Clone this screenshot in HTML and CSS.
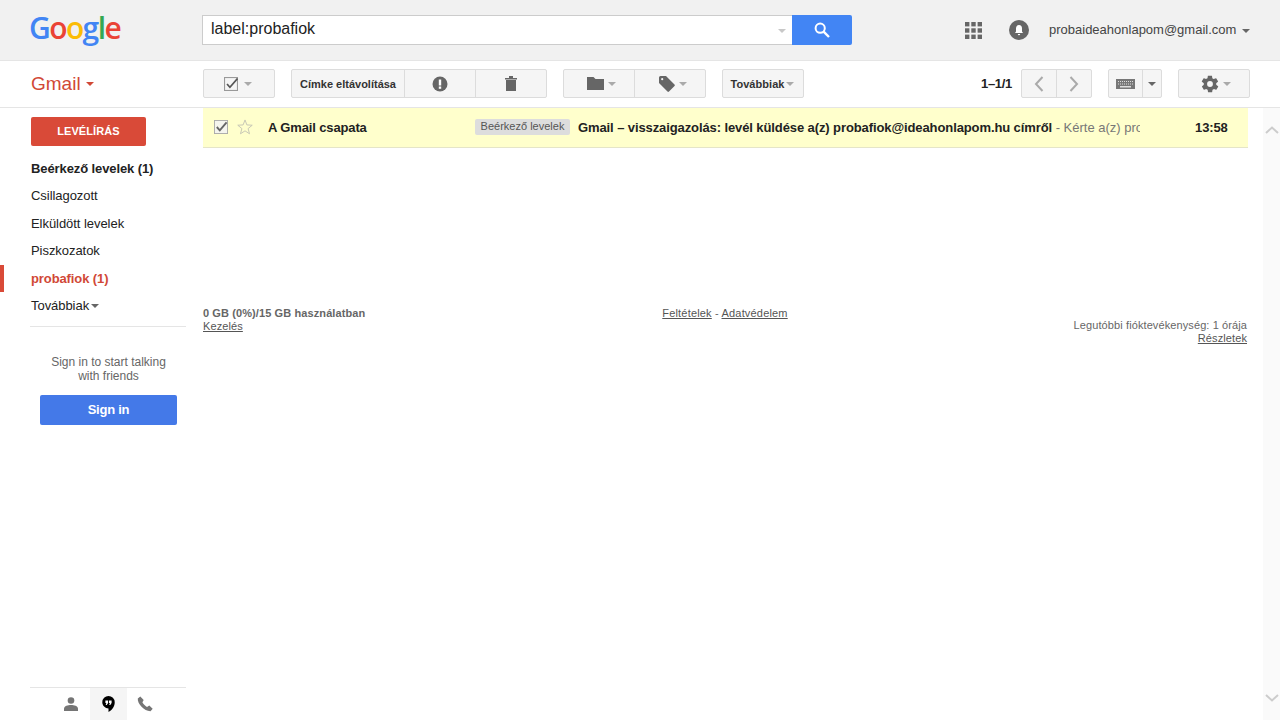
FILE: index.html
```html
<!DOCTYPE html>
<html lang="hu">
<head>
<meta charset="utf-8">
<title>Gmail</title>
<link rel="stylesheet" href="styles.css">
</head>
<body>
<header class="topbar">
  <div class="logo"><span class="g-blue">G</span><span class="g-red">o</span><span class="g-yellow">o</span><span class="g-blue">g</span><span class="g-green">l</span><span class="g-red">e</span></div>
  <form class="search">
    <div class="search-input"><span class="search-text">label:probafiok</span><i class="caret caret-light"></i></div>
    <div class="search-btn"><svg width="16" height="16" viewBox="0 0 16 16"><circle cx="6.200" cy="6.200" r="4.600" fill="none" stroke="#fff" stroke-width="2"/><path d="M9.600 9.600 15 15" stroke="#fff" stroke-width="2.400"/></svg></div>
  </form>
  <div class="account">
    <svg class="apps" width="17" height="17" viewBox="0 0 17 17" fill="#666"><rect width="4.400" height="4.400"/><rect x="6.300" width="4.400" height="4.400"/><rect x="12.600" width="4.400" height="4.400"/><rect y="6.300" width="4.400" height="4.400"/><rect x="6.300" y="6.300" width="4.400" height="4.400"/><rect x="12.600" y="6.300" width="4.400" height="4.400"/><rect y="12.600" width="4.400" height="4.400"/><rect x="6.300" y="12.600" width="4.400" height="4.400"/><rect x="12.600" y="12.600" width="4.400" height="4.400"/></svg>
    <svg class="bell" width="20" height="20" viewBox="0 0 20 20"><circle cx="10" cy="10" r="10" fill="#666"/><path d="M10 5c-2 0-3 1.500-3 3.500V11.500L6 13h8l-1-1.500V8.500C13 6.500 12 5 10 5zM8.800 14h2.400a1.200 1.200 0 0 1-2.400 0z" fill="#fff"/></svg>
    <span class="email">probaideahonlapom@gmail.com</span><i class="caret caret-dark"></i>
  </div>
</header>

<div class="toolbar">
  <div class="brand">Gmail<i class="caret caret-red"></i></div>
  <div class="actions">
    <div class="group"><div class="btn w72 pull"><span class="check"><svg width="14" height="14" viewBox="0 0 13 13"><rect x=".5" y=".5" width="12" height="12" fill="#f5f5f5" stroke="#999"/><path d="M2.800 6.500 5.500 9.500 12.500 1.500" fill="none" stroke="#555" stroke-width="1.600"/></svg></span><i class="caret"></i></div></div>
    <div class="group">
      <div class="btn label-btn">Címke eltávolítása</div>
      <div class="btn w71"><svg width="16" height="16" viewBox="0 0 16 16"><circle cx="8" cy="8" r="7.500" fill="#666"/><rect x="6.800" y="3.500" width="2.400" height="6" fill="#fff"/><rect x="6.800" y="10.500" width="2.400" height="2.300" fill="#fff"/></svg></div>
      <div class="btn w71"><svg width="12" height="15" viewBox="0 0 12 15" fill="#666"><rect y="2" width="12" height="1.500"/><rect x="4" width="4" height="2"/><rect x="1" y="4" width="10" height="11"/></svg></div>
    </div>
    <div class="group">
      <div class="btn w71 push"><svg width="17" height="13" viewBox="0 0 17 13" fill="#666"><path d="M0 0h6.500l2 2H17v11H0z"/></svg><i class="caret"></i></div>
      <div class="btn w72 push"><svg width="16" height="16" viewBox="0 0 16 16" fill="#666"><path d="M0 1.500Q0 0 1.500 0H7l8.500 8.500q.8.800 0 1.500L10 15.500q-.8.800-1.500 0L0 7z"/><circle cx="3.200" cy="3.200" r="1.100" fill="#f5f5f5"/></svg><i class="caret"></i></div>
    </div>
    <div class="group"><div class="btn more-btn">Továbbiak<i class="caret"></i></div></div>
    <div class="count">1–1/1</div>
    <div class="group nav-group">
      <div class="btn w35"><svg width="10" height="16" viewBox="0 0 10 16"><path d="M8.500 1 2 8l6.500 7" fill="none" stroke="#aaa" stroke-width="2"/></svg></div>
      <div class="btn w36"><svg width="10" height="16" viewBox="0 0 10 16"><path d="M1.500 1 8 8l-6.500 7" fill="none" stroke="#aaa" stroke-width="2"/></svg></div>
    </div>
    <div class="group">
      <div class="btn w34"><svg width="19" height="10" viewBox="0 0 19 10"><rect width="19" height="10" fill="#777"/><path d="M2 2.500h15M2 5h15" stroke="#ddd" stroke-width="1" stroke-dasharray="1 1"/><rect x="4" y="7" width="11" height="1.500" fill="#ddd"/></svg></div>
      <div class="btn w20"><i class="caret caret-dark flush"></i></div>
    </div>
    <div class="group"><div class="btn w72 gear"><svg width="20" height="20" viewBox="0 0 24 24" fill="#666"><path d="M19.400 13c.1-.3.100-.7.100-1s0-.7-.1-1l2.100-1.600c.2-.2.200-.4.100-.6l-2-3.500c-.1-.2-.4-.3-.6-.2l-2.500 1c-.5-.4-1.100-.7-1.700-1l-.4-2.600c0-.3-.2-.5-.5-.5h-4c-.3 0-.5.200-.5.400l-.4 2.700c-.6.200-1.200.6-1.700 1l-2.500-1c-.2-.1-.5 0-.6.200l-2 3.500c-.1.200-.1.500.1.600L4.600 11c0 .3-.1.700-.1 1s0 .7.100 1l-2.100 1.600c-.2.200-.2.400-.1.600l2 3.500c.1.200.4.300.6.200l2.500-1c.5.400 1.100.7 1.700 1l.4 2.600c0 .3.200.5.500.5h4c.3 0 .5-.2.500-.4l.4-2.700c.6-.2 1.200-.6 1.700-1l2.500 1c.2.100.5 0 .6-.2l2-3.500c.1-.2.100-.5-.1-.6zM12 15.500a3.500 3.500 0 1 1 0-7 3.500 3.500 0 0 1 0 7z"/></svg><i class="caret"></i></div></div>
  </div>
</div>

<div class="main">
  <aside class="sidebar">
    <div class="compose">LEVÉLÍRÁS</div>
    <nav class="folders">
      <a class="folder strong">Beérkező levelek (1)</a>
      <a class="folder">Csillagozott</a>
      <a class="folder">Elküldött levelek</a>
      <a class="folder">Piszkozatok</a>
      <a class="folder active">probafiok (1)</a>
      <a class="folder">Továbbiak<i class="caret caret-dark tight"></i></a>
    </nav>
    <div class="chat">
      <p class="chat-text">Sign in to start talking<br>with friends</p>
      <div class="signin">Sign in</div>
    </div>
    <div class="tabs">
      <div class="tab"><svg width="14" height="14" viewBox="0 0 14 14" fill="#757575"><circle cx="7" cy="3.500" r="3.300"/><path d="M0 14v-2.500C0 9 4 8 7 8s7 1 7 3.500V14z"/></svg></div>
      <div class="tab tab-on"><svg width="13" height="16" viewBox="0 0 14 18"><path d="M7 0a7 7 0 0 0-7 7c0 3.800 3.200 6.800 7 7v4c3.500-1.800 7-5.800 7-11a7 7 0 0 0-7-7z" fill="#000"/><path d="M3.500 5h3v3L5 10H3.800l.8-2H3.500zM7.500 5h3v3L9 10H7.800l.8-2H7.500z" fill="#fff"/></svg></div>
      <div class="tab"><svg width="16" height="16" viewBox="0 0 16 16" fill="#757575"><path d="M3.300 .6 .8 2.600C.2 7.800 7.500 15.500 13.500 15.300l2.200-2.500-3.400-3.200-2.300 1.300C8.200 10 6 7.800 5.400 6.200l1.300-2.300z"/></svg></div>
    </div>
  </aside>
  <section class="content">
    <div class="row">
      <svg class="row-check" width="14" height="14" viewBox="0 0 15 15"><rect x=".5" y=".5" width="14" height="14" fill="#f5f5ee" stroke="#aaa"/><path d="M3 7.500 6.200 11 13.500 2.500" fill="none" stroke="#666" stroke-width="2"/></svg>
      <svg class="star" width="16" height="16" viewBox="0 0 17 17"><path d="m8.500 1 2 5.300 5.700.3-4.400 3.600 1.500 5.500-4.800-3.100-4.800 3.100 1.500-5.500L.8 6.600l5.700-.3z" fill="none" stroke="#c4c4b4"/></svg>
      <span class="sender">A Gmail csapata</span>
      <span class="tag">Beérkező levelek</span>
      <span class="message"><b>Gmail – visszaigazolás: levél küldése a(z) probafiok@ideahonlapom.hu címről</b><span class="snippet"> - Kérte a(z) proba</span></span>
      <span class="time">13:58</span>
    </div>
    <footer class="foot">
      <div class="foot-left"><b>0 GB (0%)/15 GB használatban</b><br><a>Kezelés</a></div>
      <div class="foot-mid"><a>Feltételek</a> - <a>Adatvédelem</a></div>
      <div class="foot-right">Legutóbbi fióktevékenység: 1 órája<br><a>Részletek</a></div>
    </footer>
  </section>
  <div class="scroll">
    <svg width="14" height="8" viewBox="0 0 14 8"><path d="M1 7 7 1.500 13 7" fill="none" stroke="#ccc" stroke-width="2"/></svg>
    <svg width="14" height="8" viewBox="0 0 14 8"><path d="M1 1 7 6.500 13 1" fill="none" stroke="#ccc" stroke-width="2"/></svg>
  </div>
</div>
</body>
</html>
```

FILE: styles.css
```css
* { box-sizing: border-box; }
html, body { margin: 0; height: 100%; }
body { font-family: "Liberation Sans", Arial, sans-serif; font-size: 13px; color: #222; background: #fff; display: flex; flex-direction: column; height: 720px; overflow: hidden; }
a { color: inherit; }

.caret { display: inline-block; width: 0; height: 0; border-left: 4px solid transparent; border-right: 4px solid transparent; border-top: 4px solid #aaa; margin-left: 6px; }
.caret-light { border-top-color: #c8c8c8; }
.caret-dark { border-top-color: #666; }
.caret-red { border-top-color: #d14836; margin-left: 5px; position: relative; top: -4px; }
.tight { margin-left: 2px; position: relative; top: -2px; }

.topbar { height: 61px; flex: none; background: #f1f1f1; border-bottom: 1px solid #e5e5e5; display: flex; align-items: flex-start; }
.logo { width: 173px; margin-left: 29px; padding-top: 8px; font-family: "Open Sans", sans-serif; font-weight: 600; font-size: 30px; line-height: 40px; letter-spacing: -1.6px; white-space: nowrap; }
.g-blue { color: #4285f4; } .g-red { color: #ea4335; } .g-yellow { color: #fbbc05; } .g-green { color: #34a853; }
.search { display: flex; margin: 15px 0 0 0; height: 30px; width: 650px; }
.search-input { flex: 1; background: #fff; border: 1px solid #ccc; border-right: 0; display: flex; align-items: center; justify-content: space-between; padding: 0 6px 0 8px; }
.search-text { font-size: 16px; color: #222; position: relative; top: -1px; }
.search-input .caret { margin-top: 2px; }
.search-btn { width: 60px; background: #4285f4; border-radius: 0 2px 2px 0; display: flex; align-items: center; justify-content: center; }
.account { flex: 1; display: flex; align-items: center; height: 20px; margin-top: 20px; padding-left: 113px; }
.apps { margin-right: 27px; }
.bell { margin-right: 20px; }
.email { font-size: 13px; color: #444; position: relative; top: -1px; }
.account .caret { margin-left: 6px; margin-top: 2px; }

.toolbar { height: 47px; flex: none; border-bottom: 1px solid #e5e5e5; display: flex; align-items: flex-start; }
.brand { width: 203px; padding: 11px 0 0 31px; font-size: 19px; line-height: 24px; color: #d14836; }
.actions { flex: 1; display: flex; padding-top: 8px; }
.group { display: flex; height: 29px; margin-right: 16px; border: 1px solid #dcdcdc; border-radius: 2px; background: #f5f5f5; }
.btn { display: flex; align-items: center; justify-content: center; height: 100%; border-left: 1px solid #dcdcdc; }
.btn:first-child { border-left: 0; }
.btn .caret { margin-left: 6px; }
.btn .flush { margin-left: 0; }
.pull { padding-right: 2px; }
.push { padding-left: 5px; }
.push .caret { margin-left: 4px; }
.gear { padding-left: 2px; }
.btn.gear .caret { margin-left: 3px; }
.w72 { width: 70px; } .w71 { width: 71px; } .w35 { width: 34px; } .w36 { width: 35px; } .w34 { width: 33px; } .w20 { width: 19px; }
.group:nth-child(3) .w71 { width: 70px; }
.group:nth-child(3) .w72 { width: 71px; }
.label-btn { width: 112px; font-size: 11px; font-weight: bold; color: #333; }
.more-btn { width: 80px; padding-right: 2px; font-size: 11px; font-weight: bold; color: #333; letter-spacing: .05px; }
.btn.more-btn .caret { margin-left: 1px; }
.check { display: flex; }
.count { margin-left: auto; margin-right: 9px; line-height: 29px; font-weight: bold; font-size: 13px; color: #222; letter-spacing: -.3px; }
.group:last-child { margin-right: 30px; }

.main { flex: 1; display: flex; min-height: 0; }
.sidebar { width: 203px; flex: none; display: flex; flex-direction: column; padding-top: 9px; }
.compose { margin-left: 31px; width: 115px; height: 29px; background: #d94a38; border-radius: 2px; color: #fff; font-size: 11px; font-weight: bold; line-height: 28px; text-align: center; letter-spacing: .1px; }
.folders { margin: 8.5px 17px 0 0; padding-bottom: 7.5px; display: flex; flex-direction: column; position: relative; }
.folders::after { content: ""; position: absolute; left: 30px; right: 0; bottom: 0; border-bottom: 1px solid #e5e5e5; }
.folder { display: block; height: 27.5px; line-height: 27.5px; padding-left: 31px; font-size: 13px; color: #222; letter-spacing: -.05px; }
.strong { font-weight: bold; letter-spacing: -.1px; }
.active { font-weight: bold; color: #d14836; border-left: 4px solid #d94a38; padding-left: 27px; letter-spacing: -.1px; }
.chat { margin: 0 26px 0 40px; width: 137px; text-align: center; }
.chat-text { margin: 28px 0 12px; font-size: 12px; line-height: 14px; color: #666; }
.signin { height: 30px; background: #4479e8; border-radius: 2px; color: #fff; font-weight: bold; font-size: 13px; line-height: 30px; letter-spacing: -.25px; }
.tabs { margin: auto 17px 0 30px; height: 33px; border-top: 1px solid #e5e5e5; display: flex; justify-content: center; }
.tab { width: 37px; display: flex; align-items: center; justify-content: center; }
.tab-on { background: #f5f5f5; }

.content { width: 1045px; flex: none; }
.row { height: 40px; background: #ffffcc; border-bottom: 1px solid #e5e5c8; display: flex; align-items: center; padding-bottom: 1px; }
.row-check { margin-left: 11px; flex: none; }
.star { margin-left: 9px; flex: none; }
.sender { margin-left: 15px; width: 207px; font-weight: bold; font-size: 13px; color: #222; flex: none; letter-spacing: -.13px; }
.tag { width: 95px; height: 16px; background: #ddd; color: #555; font-size: 11px; line-height: 15px; text-align: center; border-radius: 2px; flex: none; }
.message { margin-left: 8px; width: 562px; white-space: nowrap; overflow: hidden; flex: none; font-size: 13px; color: #222; }
.message b { letter-spacing: -.1px; }
.snippet { color: #777; }
.time { margin-left: 55px; font-weight: bold; font-size: 13px; color: #222; flex: none; letter-spacing: -.1px; }
.foot { margin-top: 159px; display: flex; justify-content: space-between; font-size: 11px; line-height: 13px; color: #666; padding-right: 1px; letter-spacing: .1px; }
.foot a { text-decoration: underline; color: #555; }
.foot-left, .foot-right { width: 350px; }
.foot-right { text-align: right; padding-top: 12px; }
.foot-mid { text-align: center; flex: 1; letter-spacing: .18px; }

.scroll { flex: 1; margin-left: 15px; background: #fafafa; display: flex; flex-direction: column; justify-content: space-between; align-items: center; padding: 18px 0 18px; }
```
